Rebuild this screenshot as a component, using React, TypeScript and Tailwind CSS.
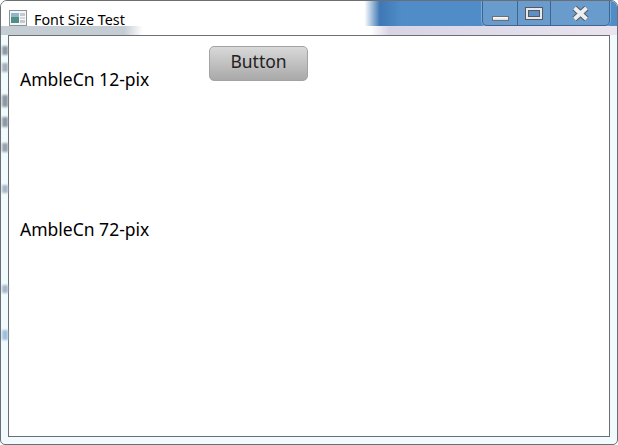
// Font Size Test window
const blobs = [
  { gap: 'mt-[11px] h-[9px] bg-[#8d98a4]' },
  { gap: 'mt-[8px] h-[9px] bg-[#a4aeb9]' },
  { gap: 'mt-[23px] h-[12px] bg-[#8d98a4]' },
  { gap: 'mt-[10px] h-[10px] bg-[#8d98a4]' },
  { gap: 'mt-[16px] h-[9px] bg-[#97a2ae]' },
  { gap: 'mt-[33px] h-[8px] bg-[#a4b6c8]' },
  { gap: 'mt-[92px] h-[8px] bg-[#a4b6c8]' },
  { gap: 'mt-[37px] h-[10px] bg-[#9fc0dc]' },
]

export default function App() {
  return (
    <div className="flex flex-col w-[618px] h-[445px] overflow-hidden rounded-t-[7px] rounded-b-[5px] border border-[#6b6f73] bg-[#f1fbfd] font-['Noto_Sans',sans-serif]">
      {/* title bar */}
      <div className="flex items-start h-[25px] pl-[8px] pr-[7px] bg-[linear-gradient(90deg,#ffffff_0,#ffffff_59%,#3f78b4_61.5%,#4f8cc8_65%,#4f8cc8_100%)]">
        <svg width="18" height="16" viewBox="0 0 18 16" className="mt-[9px] shrink-0">
          <rect x="0.5" y="0.5" width="17" height="15" fill="#f4f6f7" stroke="#8b9298" />
          <rect x="2" y="3" width="8" height="10" fill="#4f8f86" />
          <rect x="2" y="3" width="8" height="4" fill="#8fb7c9" />
          <rect x="11" y="3" width="5" height="3" fill="#c3c9cd" />
          <rect x="11" y="7" width="5" height="2" fill="#d5d9dc" />
          <rect x="11" y="10" width="5" height="3" fill="#c3c9cd" />
        </svg>
        <span className="ml-[7px] mt-[9px] text-[14.3px] leading-[19px] text-black">Font Size Test</span>
        <div className="ml-auto flex h-[25px] w-[128px] rounded-b-[5px] border border-t-0 border-[#3c668f] bg-[#6a9bcd] shadow-[0_0_0_1px_rgba(255,255,255,0.25)]">
          <div className="flex w-[35px] items-end justify-center border-r border-[#3c668f] pb-[4px]">
            <div className="h-[5px] w-[17px] border border-[#6b7077] bg-gradient-to-b from-white to-[#d5d8dc]" />
          </div>
          <div className="flex w-[33px] items-start justify-center border-r border-[#3c668f] pt-[6px]">
            <div className="h-[13px] w-[18px] border border-[#55595f] bg-[#e6e8eb] p-[2px]">
              <div className="h-full w-full border border-[#55595f] bg-[#5d8fc4]" />
            </div>
          </div>
          <div className="flex flex-1 items-start justify-center pt-[5px]">
            <svg width="17" height="15" viewBox="0 0 17 15">
              <path d="M2.5 2 L8.5 7.5 L14.5 2 M2.5 13 L8.5 7.5 L14.5 13" fill="none" stroke="#55595f" strokeWidth="6" />
              <path d="M2.5 2 L8.5 7.5 L14.5 2 M2.5 13 L8.5 7.5 L14.5 13" fill="none" stroke="#eceef0" strokeWidth="4" />
            </svg>
          </div>
        </div>
      </div>

      {/* blurred desktop under the title bar */}
      <div className="h-[9px] bg-[linear-gradient(90deg,#c4ccd4_0,#c4ccd4_20%,#ffffff_23%,#ffffff_60%,#d9d4e4_63%,#e9e4ef_100%)]" />

      <div className="flex flex-1">
        <div className="flex w-[7px] flex-col pl-[1px]">
          {blobs.map((b, i) => (
            <div key={i} className={b.gap + ' blur-[1px]'} />
          ))}
        </div>

        {/* client area */}
        <div className="w-[602px] h-[402px] border border-[#6b6f73] bg-white">
          <div className="flex items-start pl-[11px]">
            <span className="mt-[31px] w-[189px] text-[17.5px] leading-[24px] text-black">AmbleCn 12-pix</span>
            <button className="mt-[10px] h-[35px] w-[99px] rounded-[5px] border border-[#a3a3a3] bg-gradient-to-b from-[#d9d9d9] to-[#a9a9a9] pb-[4px] text-[17.5px] text-[#222]">
              Button
            </button>
          </div>
          <div className="mt-[126px] pl-[11px] text-[17.5px] leading-[24px] text-black">AmbleCn 72-pix</div>
        </div>
      </div>
    </div>
  )
}
